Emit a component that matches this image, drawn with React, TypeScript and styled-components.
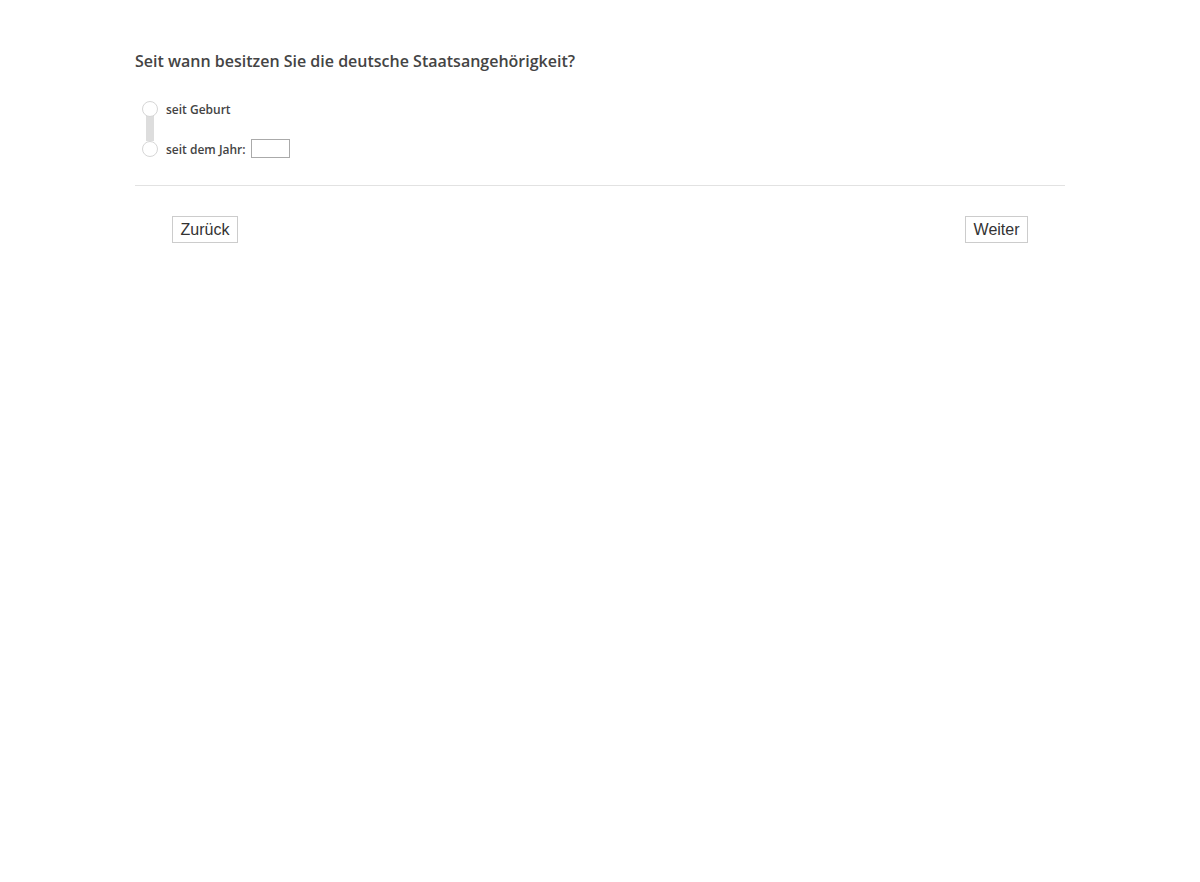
import styled, { createGlobalStyle } from "styled-components";

const Global = createGlobalStyle`
  body {
    margin: 0;
    background: #ffffff;
    font-family: "Open Sans", sans-serif;
  }
`;

const Page = styled.div`
  width: 930px;
  margin: 0 auto 0 135px;
  padding-top: 50px;
`;

const Question = styled.h2`
  margin: 0;
  font-size: 16px;
  font-weight: 600;
  line-height: 22px;
  color: #444444;
`;

const Options = styled.div`
  position: relative;
  margin-top: 27px;
  display: flex;
  flex-direction: column;
  gap: 20px;
  padding: 0 0 26px 7px;
  border-bottom: 1px solid #e2e2e2;
`;

const Track = styled.span`
  position: absolute;
  left: 11px;
  top: 12px;
  width: 8px;
  height: 30px;
  background: #dddddd;
`;

const Option = styled.label`
  position: relative;
  display: flex;
  align-items: center;
  height: 20px;
  font-size: 12px;
  font-weight: 600;
  color: #444444;
`;

const Radio = styled.span`
  width: 14px;
  height: 14px;
  border-radius: 50%;
  border: 1px solid #d6d6d6;
  background: #ffffff;
  margin-right: 8px;
  flex-shrink: 0;
`;

const YearInput = styled.input`
  width: 33px;
  height: 15px;
  margin: -1px 0 0 5px;
  border: 1px solid #aaaaaa;
  padding: 1px 2px;
  font-size: 12px;
  outline: none;
`;

const Nav = styled.div`
  display: flex;
  justify-content: space-between;
  padding: 30px 37px 0 37px;
`;

const NavButton = styled.button`
  height: 27px;
  padding: 0 7.5px;
  background: #ffffff;
  border: 1px solid #cccccc;
  border-radius: 0;
  font-family: "Liberation Sans", Arial, sans-serif;
  font-size: 16px;
  color: #333333;
  cursor: pointer;
`;

export default function App() {
  return (
    <>
      <Global />
      <Page>
        <Question>Seit wann besitzen Sie die deutsche Staatsangehörigkeit?</Question>
        <Options>
          <Track />
          <Option>
            <Radio />
            seit Geburt
          </Option>
          <Option>
            <Radio />
            seit dem Jahr:
            <YearInput type="text" />
          </Option>
        </Options>
        <Nav>
          <NavButton>Zurück</NavButton>
          <NavButton>Weiter</NavButton>
        </Nav>
      </Page>
    </>
  );
}
